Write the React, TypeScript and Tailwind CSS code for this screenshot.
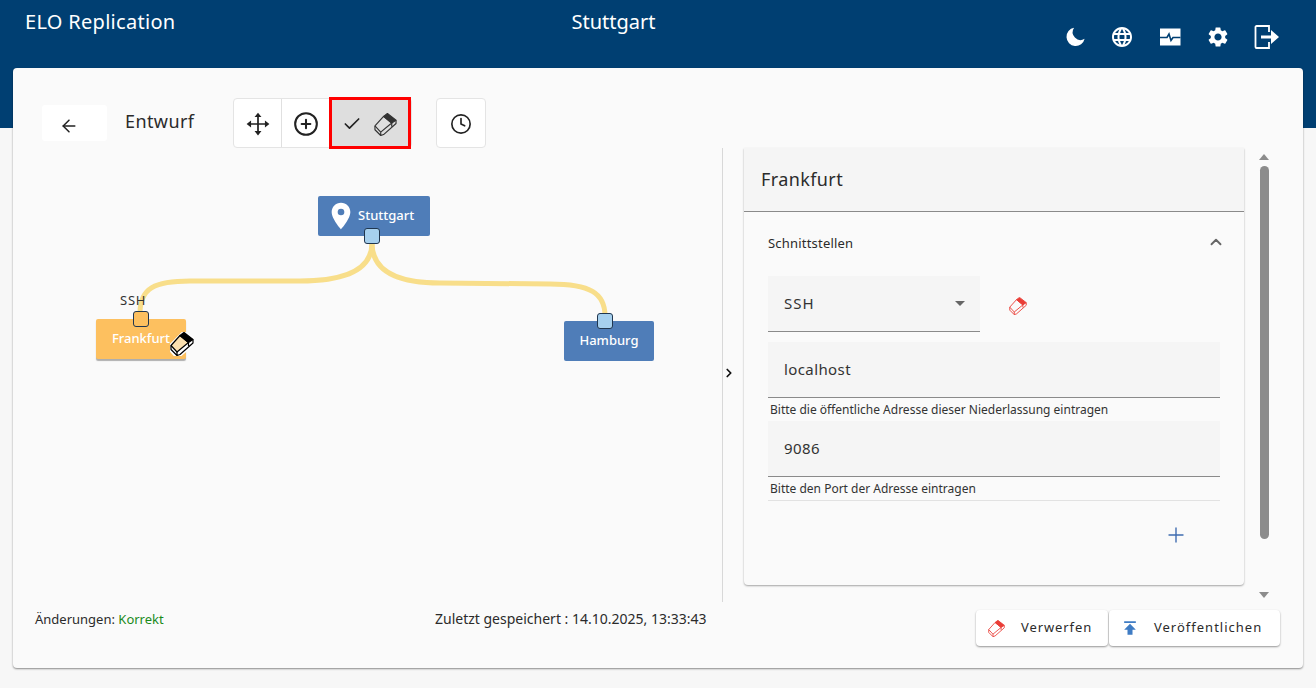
import * as React from 'react';
import { ArrowLeft, Check, ChevronRight, ChevronUp, CirclePlus, Clock, Plus } from 'lucide-react';
import { MdLanguage, MdLocationOn, MdPublish, MdSettings } from 'react-icons/md';

const font = "font-['Noto_Sans',sans-serif]";

// 3D eraser block, the tip is filled and the body only outlined
const Eraser = ({ className, body = 'none', halo = false }: { className?: string; body?: string; halo?: boolean }) => (
  <svg viewBox="0 0 24 24" className={className} fill="none" stroke="currentColor" strokeWidth="1.2" strokeLinejoin="round">
    {halo && <path d="M1 13.5 14 .5 23.5 7.5V11L9 23.5H6L1 18Z" fill="white" stroke="white" strokeWidth="4" />}
    <path d="M1 13.5 10 3.5 18.5 10.5 7 20Z" fill={body} />
    <path d="M10 3.5 14 .5 23 7.5 18.5 10.5Z" fill="currentColor" />
    <path d="M1 13.5V17.5L7 23.5V20M7 23.5 10 22.5 23 11V7.5M18.5 10.5V14" />
  </svg>
);

const MoveIcon = () => (
  <svg viewBox="0 0 24 24" className="h-[26px] w-[26px]" fill="#222">
    <path d="M11.2 5h1.6v14h-1.6zM5 11.2h14v1.6H5z" />
    <path d="M12 1.5 15.2 5.6H8.8zM12 22.5 8.8 18.4h6.4zM1.5 12 5.6 8.8v6.4zM22.5 12 18.4 15.2V8.8z" />
  </svg>
);

const MoonIcon = () => (
  <svg viewBox="0 0 24 24" className="h-[22px] w-[22px]" fill="white">
    <path d="M11 2A10 10 0 1 0 22.5 14 A8.5 8.5 0 0 1 11 2Z" />
  </svg>
);

const MonitorIcon = () => (
  <svg viewBox="0 0 24 24" className="h-[24px] w-[24px]">
    <path fill="white" d="M2 3.5h20.5v17H2z" />
    <path fill="none" stroke="#003f72" strokeWidth="1.6" d="M2 12.5h7l2-3.5 2 6.5 2-3h7.5" />
  </svg>
);

const ExitIcon = () => (
  <svg viewBox="0 0 26 26" className="h-[26px] w-[26px]" fill="none">
    <path stroke="white" strokeWidth="1.8" d="M15 8V2H2.5a1 1 0 0 0-1 1v20a1 1 0 0 0 1 1H15v-6" />
    <path fill="white" d="M7 11.5h10V6l8 7-8 7v-5.5H7z" />
  </svg>
);

const Port = ({ className, color }: { className: string; color: string }) => (
  <div className={`absolute h-[16px] w-[16px] rounded-[3px] border-[1.5px] border-[#20364f] ${color} ${className}`} />
);

const Field = ({ value, hint }: { value: string; hint: string }) => (
  <>
    <div className="flex h-[56px] items-center border-b border-[#8a8a8a] bg-[#f5f5f5] pl-[16px] text-[15px] tracking-[0.4px] text-[#333]">
      {value}
    </div>
    <div className="h-[23px] pl-[2px] pt-[5px] text-[12px] leading-[14px] text-[#333]">{hint}</div>
  </>
);

export default function App() {
  return (
    <div className={`${font} h-[688px] w-[1316px] overflow-hidden bg-[#f7f7f7] text-[#2b2b2b]`}>
      <header className="relative h-[128px] bg-[#003f72] text-white">
        <div className="flex h-[44px] items-center pl-[25px] text-[20px] tracking-[0.3px]">ELO Replication</div>
        <div className="absolute left-0 right-[89px] top-0 flex h-[44px] items-center justify-center text-[20px]">Stuttgart</div>
        <div className="absolute right-[36px] top-[24px] flex h-[26px] items-center gap-[24px]">
          <MoonIcon />
          <MdLanguage size={24} />
          <MonitorIcon />
          <MdSettings size={24} />
          <ExitIcon />
        </div>
      </header>

      <main className="relative mx-[13px] -mt-[60px] flex h-[600px] flex-col rounded-[4px] bg-[#fafafa] shadow-[0_1px_2px_rgba(0,0,0,0.45)]">
        {/* toolbar */}
        <div className="flex h-[80px] items-start pl-[29px] pt-[30px]">
          <button className="mt-[7px] flex h-[36px] w-[65px] items-center justify-start rounded-[3px] bg-white pl-[17px]">
            <ArrowLeft size={20} strokeWidth={1.8} className="mt-[5px] text-[#222]" />
          </button>
          <div className="ml-[18px] mt-[10px] w-[108px] text-[18px] leading-[26px] tracking-[0.4px]">Entwurf</div>
          <div className="flex h-[50px] rounded-[4px] border border-[#e4e4e4] bg-white">
            <div className="flex w-[48px] items-center justify-center border-r border-[#e0e0e0] pt-[2px]">
              <MoveIcon />
            </div>
            <div className="flex w-[47px] items-center justify-center pl-[1px] pt-[2px]">
              <CirclePlus size={26} strokeWidth={1.9} className="text-[#222]" />
            </div>
            <div className="-my-[2px] flex w-[82px] items-center gap-[12px] border-[3px] border-[#ff0000] bg-[#dedede] pl-[10px] pt-[2px]">
              <Check size={20} strokeWidth={2} className="text-[#222]" />
              <Eraser className="h-[23px] w-[23px] text-[#333]" />
            </div>
          </div>
          <div className="ml-[24px] flex h-[50px] w-[50px] items-center justify-center rounded-[4px] border border-[#e4e4e4] bg-white pt-[2px]">
            <Clock size={22} strokeWidth={1.8} className="text-[#222]" />
          </div>
        </div>

        <div className="flex h-[454px]">
          {/* diagram canvas */}
          <div className="relative w-[710px] shrink-0 border-r border-[#d8d8d8]">
            <svg className="absolute left-0 top-0 h-full w-full" fill="none" stroke="#f8de8a" strokeWidth="5">
              <path d="M359 95C359 122 332 133 287 133L177 133C142 133 127 140 127 165" />
              <path d="M359 95C359 122 382 135 427 135L537 136C577 136 592 145 592 168" />
            </svg>

            <div className="absolute left-[305px] top-[48px] flex h-[40px] w-[112px] items-center rounded-[2px] bg-[#4f7db8] pl-[7px] text-[13px] font-medium text-white">
              <MdLocationOn size={32} />
              <span className="ml-[1px]">Stuttgart</span>
            </div>
            <Port className="left-[351px] top-[80px]" color="bg-[#a6d0ee]" />

            <div className="absolute left-[107px] top-[144px] text-[13px] leading-[16px] tracking-[0.8px] text-[#333]">SSH</div>
            <div className="absolute left-[83px] top-[171px] flex h-[40px] w-[90px] items-center justify-center rounded-[2px] bg-[#fdc05f] text-[13px] font-medium text-white shadow-[0_2px_1px_rgba(0,0,0,0.3)]">
              Frankfurt
            </div>
            <Port className="left-[120px] top-[163px]" color="bg-[#fdc05f]" />
            <Eraser className="absolute left-[157px] top-[184px] h-[24px] w-[24px] text-black" body="#fbe0b0" halo />

            <div className="absolute left-[551px] top-[173px] flex h-[40px] w-[90px] items-center justify-center rounded-[2px] bg-[#4f7db8] text-[13px] font-medium text-white">
              Hamburg
            </div>
            <Port className="left-[584px] top-[165px]" color="bg-[#a6d0ee]" />

            <ChevronRight size={14} strokeWidth={3} className="absolute -right-[14px] top-[218px] text-[#111]" />
          </div>

          {/* details panel */}
          <div className="ml-[21px] flex h-[437px] w-[500px] flex-col rounded-b-[4px] bg-[#fafafa] shadow-[0_1px_2px_rgba(0,0,0,0.35)]">
            <div className="flex h-[64px] shrink-0 items-center border-b border-[#8a8a8a] bg-[#f5f5f5] pl-[17px] text-[18px] tracking-[0.4px]">
              Frankfurt
            </div>
            <div className="px-[24px]">
              <div className="flex h-[64px] items-center justify-between">
                <span className="text-[13px] tracking-[0.2px]">Schnittstellen</span>
                <ChevronUp size={18} strokeWidth={2.5} className="-mt-[4px] mr-[-5px] text-[#666]" />
              </div>
              <div className="flex items-center">
                <div className="flex h-[56px] w-[212px] items-center justify-between border-b border-[#8a8a8a] bg-[#f5f5f5] pl-[16px] pr-[15px] text-[15px] tracking-[1px] text-[#333]">
                  SSH
                  <span className="h-0 w-0 border-x-[5px] border-t-[5px] border-x-transparent border-t-[#666]" />
                </div>
                <Eraser className="ml-[29px] mt-[4px] h-[18px] w-[18px] text-[#ea3d36]" />
              </div>
              <div className="mt-[10px]">
                <Field value="localhost" hint="Bitte die öffentliche Adresse dieser Niederlassung eintragen" />
                <Field value="9086" hint="Bitte den Port der Adresse eintragen" />
              </div>
              <div className="flex h-[70px] items-center justify-end border-t border-[#e2e2e2] pr-[32px]">
                <Plus size={24} strokeWidth={1.4} className="-mt-[1px] text-[#3f6cb0]" />
              </div>
            </div>
          </div>

          {/* scrollbar */}
          <div className="ml-[15px] flex h-[454px] w-[10px] flex-col items-center pt-[6px]">
            <span className="h-0 w-0 border-x-[5px] border-b-[6px] border-x-transparent border-b-[#8c8c8c]" />
            <div className="mt-[6px] h-[373px] w-[9px] rounded-full bg-[#8c8c8c]" />
            <span className="mt-[53px] h-0 w-0 border-x-[5px] border-t-[6px] border-x-transparent border-t-[#8c8c8c]" />
          </div>
        </div>

        {/* footer */}
        <div className="flex grow items-start pl-[22px] pr-[22px]">
          <div className="mt-[8px] w-[400px] text-[13px] leading-[18px]">
            Änderungen: <span className="text-[#1a8a1a]">Korrekt</span>
          </div>
          <div className="mt-[7px] text-[14px] leading-[20px]">Zuletzt gespeichert : 14.10.2025, 13:33:43</div>
          <div className="ml-auto mr-[1px] mt-[8px] flex gap-[1px]">
            <button className="flex h-[36px] w-[132px] items-center rounded-[4px] bg-white pl-[12px] text-[13px] tracking-[0.9px] shadow-[0_1px_2px_rgba(0,0,0,0.4)]">
              <Eraser className="h-[17px] w-[17px] text-[#ea3d36]" />
              <span className="ml-[16px]">Verwerfen</span>
            </button>
            <button className="flex h-[36px] w-[171px] items-center rounded-[4px] bg-white pl-[11px] text-[13px] tracking-[1px] shadow-[0_1px_2px_rgba(0,0,0,0.4)]">
              <MdPublish size={20} className="text-[#3f7cc4]" />
              <span className="ml-[14px]">Veröffentlichen</span>
            </button>
          </div>
        </div>
      </main>
    </div>
  );
}
